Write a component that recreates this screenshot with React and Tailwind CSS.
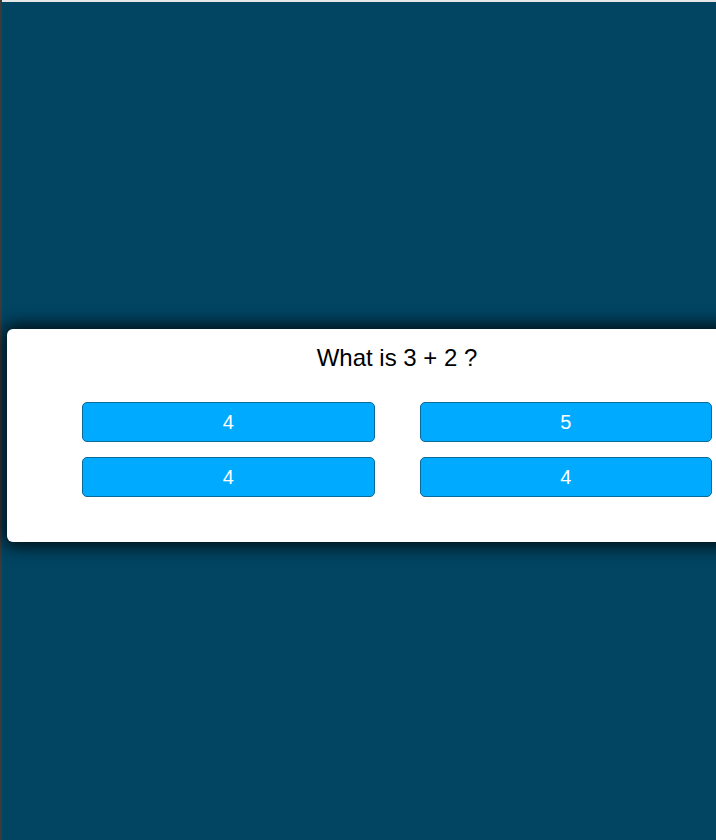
import React from "react";

const options = ["4", "5", "4", "4"];

const App = () => {
  return (
    <div
      className="w-[716px] h-[840px] overflow-hidden flex bg-[#014563]"
      style={{ fontFamily: '"Liberation Sans", Arial, sans-serif' }}
    >
      <div className="w-[2px] h-full bg-[#3b3b3b] shrink-0" />
      <div className="flex-1 flex flex-col min-w-0">
        <div className="h-[2px] bg-[#e6e6e6] shrink-0" />
        <div className="pt-[327px] pl-[5px]">
          <div className="w-[780px] bg-white rounded-[6px] shadow-[0_0_18px_4px_rgba(0,0,0,0.85)] pt-[11px] pb-[45px] px-[75px]">
            <h2 className="text-[24px] leading-[36px] text-black text-center font-normal">
              What is 3 + 2 ?
            </h2>
            <div className="mt-[26px] grid grid-cols-2 gap-x-[45px] gap-y-[15px]">
              {options.map((o, i) => (
                <button
                  key={i}
                  className="h-[40px] bg-[#00aaff] border border-[#0a6a9a] rounded-[5px] text-white text-[20px]"
                >
                  {o}
                </button>
              ))}
            </div>
          </div>
        </div>
      </div>
    </div>
  );
};

export default App;
